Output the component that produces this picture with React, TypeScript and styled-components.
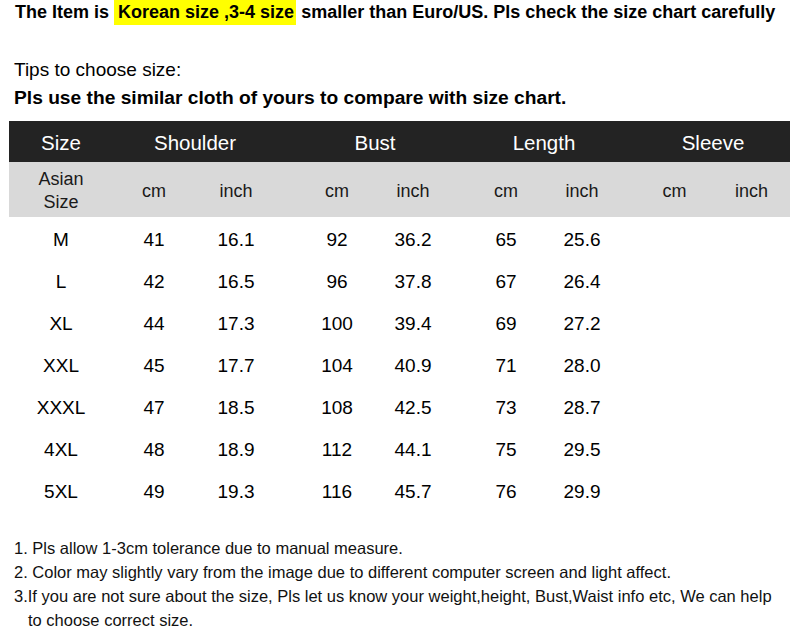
import React from "react";
import styled, { createGlobalStyle } from "styled-components";

const GlobalStyle = createGlobalStyle`
  html, body {
    margin: 0;
    padding: 0;
    background: #fff;
  }
  body {
    font-family: "Liberation Sans", Arial, sans-serif;
    color: #000;
  }
`;

const COLS = "104px 82px 82px 22px 76px 76px 17px 76px 76px 16px 77px 77px";

// column starts for the 9 data cells (size + 4 pairs)
const CELL_COLS = [1, 2, 3, 5, 6, 8, 9, 11, 12];

const groups = [
  { label: "Shoulder", col: 2 },
  { label: "Bust", col: 5 },
  { label: "Length", col: 8 },
  { label: "Sleeve", col: 11 },
];

const rows = [
  ["M", "41", "16.1", "92", "36.2", "65", "25.6", "", ""],
  ["L", "42", "16.5", "96", "37.8", "67", "26.4", "", ""],
  ["XL", "44", "17.3", "100", "39.4", "69", "27.2", "", ""],
  ["XXL", "45", "17.7", "104", "40.9", "71", "28.0", "", ""],
  ["XXXL", "47", "18.5", "108", "42.5", "73", "28.7", "", ""],
  ["4XL", "48", "18.9", "112", "44.1", "75", "29.5", "", ""],
  ["5XL", "49", "19.3", "116", "45.7", "76", "29.9", "", ""],
];

function App() {
  return (
    <Page>
      <GlobalStyle />
      <Notice>
        The Item is <Highlight>Korean size ,3-4 size</Highlight> smaller than
        Euro/US. Pls check the size chart carefully
      </Notice>

      <Tips>Tips to choose size:</Tips>
      <Advice>Pls use the similar cloth of yours to compare with size chart.</Advice>

      <Table>
        <HeadRow>
          <Cell $col={1}>Size</Cell>
          {groups.map((g) => (
            <Cell key={g.label} $col={g.col} $span={2}>
              {g.label}
            </Cell>
          ))}
        </HeadRow>
        <UnitRow>
          <Cell $col={1}>
            Asian
            <br />
            Size
          </Cell>
          {groups.map((g) => (
            <React.Fragment key={g.label}>
              <Cell $col={g.col}>cm</Cell>
              <Cell $col={g.col + 1}>inch</Cell>
            </React.Fragment>
          ))}
        </UnitRow>
        {rows.map((r) => (
          <DataRow key={r[0]}>
            {r.map((v, i) => (
              <Cell key={i} $col={CELL_COLS[i]}>
                {v}
              </Cell>
            ))}
          </DataRow>
        ))}
      </Table>

      <Notes>
        <li>1. Pls allow 1-3cm tolerance due to manual measure.</li>
        <li>2. Color may slightly vary from the image due to different computer screen and light affect.</li>
        <li>
          3.If you are not sure about the size, Pls let us know your weight,height, Bust,Waist info etc, We can help
          <br />
          <Indent>to choose correct size.</Indent>
        </li>
      </Notes>
    </Page>
  );
}

const Page = styled.div`
  width: 800px;
  height: 637px;
  overflow: hidden;
  display: flex;
  flex-direction: column;
`;

const Notice = styled.div`
  height: 25px;
  line-height: 25px;
  padding-left: 15px;
  font-size: 18px;
  font-weight: 700;
  white-space: nowrap;
`;

const Highlight = styled.span`
  display: inline-block;
  background: #ffff00;
  padding: 0 2px 0 4px;
`;

const Tips = styled.div`
  margin-top: 31px;
  padding-left: 14px;
  font-size: 19px;
  line-height: 28px;
`;

const Advice = styled.div`
  padding-left: 14px;
  font-size: 19.2px;
  font-weight: 700;
  line-height: 28px;
`;

const Table = styled.div`
  margin: 9px 0 0 9px;
  width: 781px;
  display: flex;
  flex-direction: column;
`;

const Row = styled.div`
  display: grid;
  grid-template-columns: ${COLS};
  align-items: center;
  padding-top: 3px;
  box-sizing: border-box;
`;

const HeadRow = styled(Row)`
  height: 41px;
  background: #232323;
  color: #fff;
  font-size: 20.5px;
`;

const UnitRow = styled(Row)`
  height: 55px;
  background: #d9d9d9;
  color: #1a1a1a;
  font-size: 18px;
  line-height: 23px;
`;

const DataRow = styled(Row)`
  height: 42px;
  font-size: 19px;
`;

const Cell = styled.div<{ $col: number; $span?: number }>`
  grid-column: ${(p) => p.$col} / span ${(p) => p.$span ?? 1};
  text-align: center;
  white-space: nowrap;
`;

const Notes = styled.ul`
  list-style: none;
  margin: 25px 0 0;
  padding: 0 0 0 14px;
  font-size: 16.5px;
  line-height: 24px;
  color: #111;
`;

const Indent = styled.span`
  padding-left: 14px;
`;

export default App;
